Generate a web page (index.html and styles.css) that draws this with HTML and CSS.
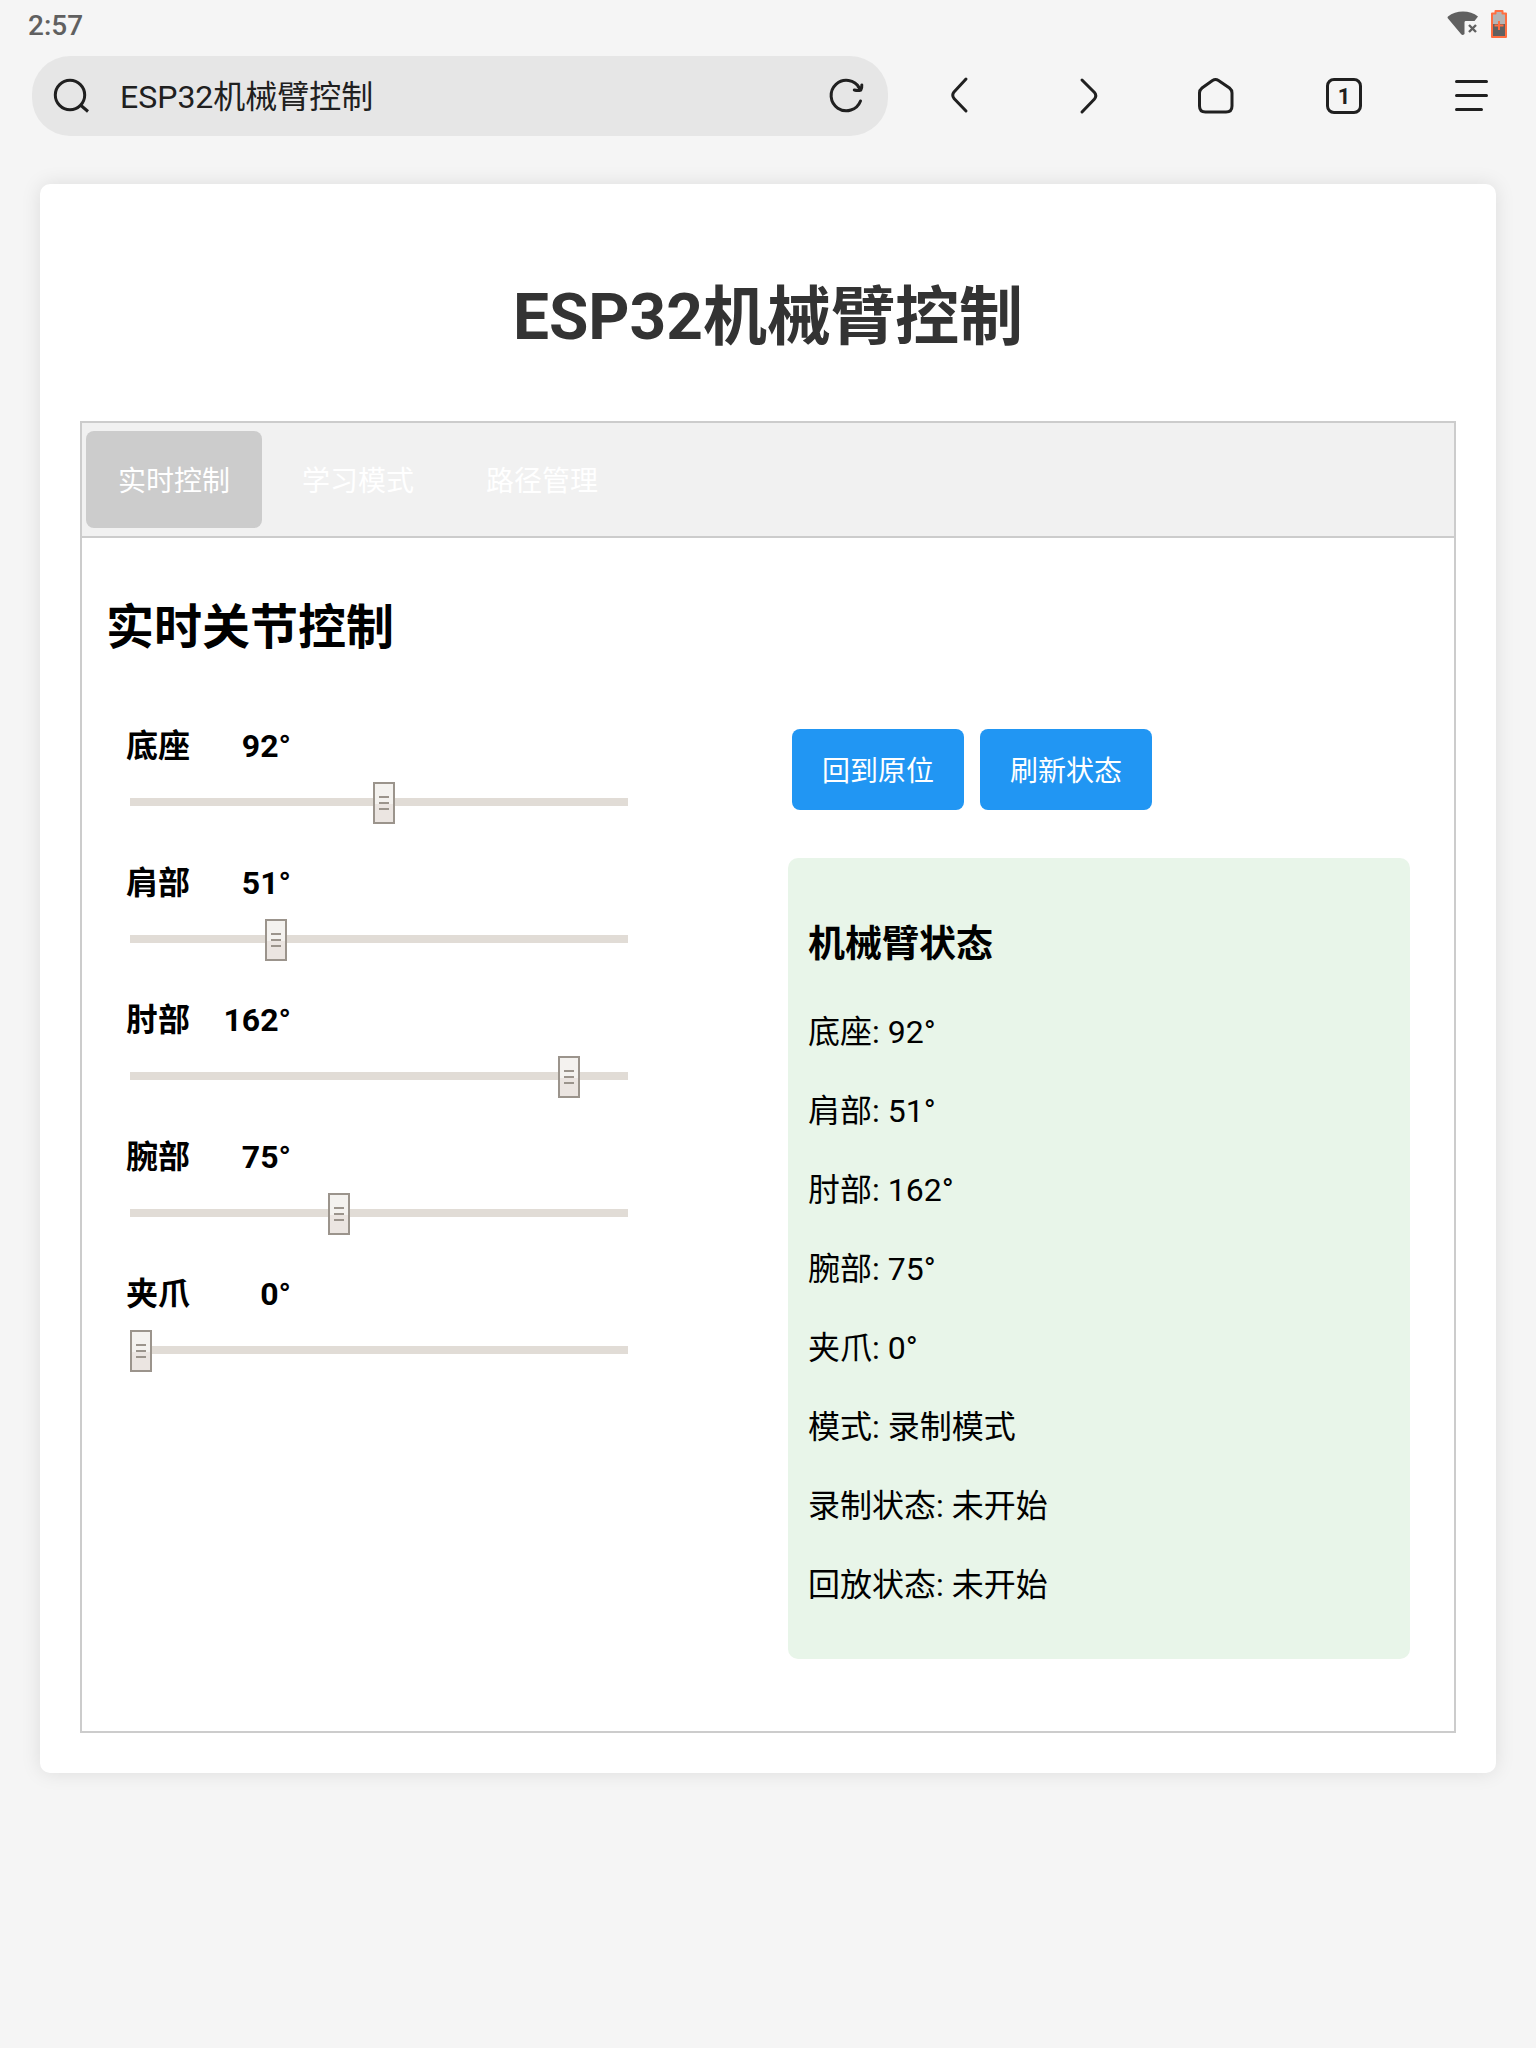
FILE: index.html
```html
<!DOCTYPE html>
<html lang="zh-CN">
<head>
<meta charset="utf-8">
<meta name="viewport" content="width=device-width, initial-scale=1">
<title>ESP32机械臂控制</title>
<link rel="stylesheet" href="styles.css">
</head>
<body>
<header class="browser">
  <div class="status-bar">
    <time class="clock">2:57</time>
    <div class="indicators">
      <svg width="32" height="28" viewBox="0 0 32 28" aria-hidden="true">
        <path d="M1 6.500C9-.3 23-.3 31 6.500L27.500 11H19c-1 0-1.500.5-1.500 1.500V24c-1.500 1.500-2.500 1.300-3.500 0L1 8.500c-.6-.7-.6-1.300 0-2z" fill="#606060"/>
        <path d="M22 15l7 7M29 15l-7 7" stroke="#606060" stroke-width="2.400" fill="none"/>
      </svg>
      <svg width="16" height="28" viewBox="0 0 16 28" aria-hidden="true">
        <path d="M4.500 3.500V1h7v2.500H15V27H1V3.500z" fill="#b4b4b4"/>
        <path d="M1 14h14v13H1z" fill="#606060"/>
        <path d="M4.500 3.500V1h7v2.500H15V27H1V3.500zM8 11v9M3.500 15.500h9" fill="none" stroke="#ff6e40" stroke-width="2" stroke-linejoin="round"/>
      </svg>
    </div>
  </div>
  <div class="toolbar">
    <div class="address">
      <svg class="search-icon" width="40" height="40" viewBox="0 0 40 40" aria-hidden="true"><circle cx="18" cy="19" r="14.700"/><path d="M29 29.500l7 6"/></svg>
      <input class="address-input" type="text" value="ESP32机械臂控制" aria-label="地址栏">
      <button class="icon-button" type="button" aria-label="刷新">
        <svg width="40" height="40" viewBox="0 0 40 40"><path class="round" d="M32.500 25A15.200 15.200 0 1 1 31.500 12M33.800 9c.2 2-.2 3.500-1 5-2 .8-4 .7-6.500 0M32.800 14l-3-4"/></svg>
      </button>
    </div>
    <nav class="browser-nav" aria-label="浏览器">
      <button class="icon-button" type="button" aria-label="后退"><svg width="40" height="40" viewBox="0 0 40 40"><path class="round" d="M26 3L14 16q-2.500 3 0 6.500L26 35"/></svg></button>
      <button class="icon-button" type="button" aria-label="前进"><svg width="40" height="40" viewBox="0 0 40 40"><path class="round" d="M14 4L26.500 16.500q2.500 3 0 6.500L14 36"/></svg></button>
      <button class="icon-button" type="button" aria-label="主页"><svg width="40" height="40" viewBox="0 0 40 40"><path d="M16.500 4.500q3-2 6 0L33.500 12q2.500 2 2.500 5V30q0 6-6 6H9.500q-6 0-6-6V17q0-3 2.500-5z"/></svg></button>
      <button class="icon-button" type="button" aria-label="标签页"><span class="tab-count">1</span></button>
      <button class="icon-button" type="button" aria-label="菜单"><svg width="40" height="40" viewBox="0 0 40 40"><path class="round" d="M4.500 5.500h30M4.500 19.500h30M4.500 33.500h25"/></svg></button>
    </nav>
  </div>
</header>

<main class="container">
  <h1 class="title">ESP32机械臂控制</h1>
  <section class="panel">
    <div class="tabs" role="tablist">
      <button class="tab active" type="button" role="tab" aria-selected="true">实时控制</button>
      <button class="tab" type="button" role="tab" aria-selected="false">学习模式</button>
      <button class="tab" type="button" role="tab" aria-selected="false">路径管理</button>
    </div>
    <div class="tab-content" role="tabpanel">
      <h2 class="section-title">实时关节控制</h2>
      <div class="columns">
        <div class="column">
          <div class="joint">
            <div class="joint-head"><label for="base">底座</label><output for="base">92°</output></div>
            <input class="slider" id="base" type="range" min="0" max="180" value="92">
          </div>
          <div class="joint">
            <div class="joint-head"><label for="shoulder">肩部</label><output for="shoulder">51°</output></div>
            <input class="slider" id="shoulder" type="range" min="0" max="180" value="51">
          </div>
          <div class="joint">
            <div class="joint-head"><label for="elbow">肘部</label><output for="elbow">162°</output></div>
            <input class="slider" id="elbow" type="range" min="0" max="180" value="162">
          </div>
          <div class="joint">
            <div class="joint-head"><label for="wrist">腕部</label><output for="wrist">75°</output></div>
            <input class="slider" id="wrist" type="range" min="0" max="180" value="75">
          </div>
          <div class="joint">
            <div class="joint-head"><label for="gripper">夹爪</label><output for="gripper">0°</output></div>
            <input class="slider" id="gripper" type="range" min="0" max="180" value="0">
          </div>
        </div>
        <div class="column">
          <div class="actions">
            <button class="action" type="button">回到原位</button>
            <button class="action" type="button">刷新状态</button>
          </div>
          <div class="status">
            <h3 class="status-title">机械臂状态</h3>
            <p>底座: 92°</p>
            <p>肩部: 51°</p>
            <p>肘部: 162°</p>
            <p>腕部: 75°</p>
            <p>夹爪: 0°</p>
            <p>模式: 录制模式</p>
            <p>录制状态: 未开始</p>
            <p>回放状态: 未开始</p>
          </div>
        </div>
      </div>
    </div>
  </section>
</main>
</body>
</html>
```
FILE: styles.css
```css
* {
  box-sizing: border-box;
}

body {
  margin: 0;
  background: #f5f5f5;
  color: #000;
  font-family: Roboto, "Noto Sans CJK SC", sans-serif;
  font-size: 32px;
  line-height: 47px;
}

button,
input {
  font-family: inherit;
}

button {
  margin: 0;
  border: 0;
  cursor: pointer;
}

/* Browser chrome */

.status-bar {
  display: flex;
  align-items: center;
  justify-content: space-between;
  height: 48px;
  padding: 0 29px 0 28px;
}

.clock {
  padding-top: 4px;
  color: #606060;
  font-size: 28px;
  font-weight: 500;
  line-height: 48px;
}

.indicators {
  display: flex;
  gap: 12px;
}

.toolbar {
  display: flex;
  align-items: center;
  gap: 8px;
  padding: 8px 0 0 32px;
}

.address {
  display: flex;
  flex: 1;
  align-items: center;
  height: 80px;
  padding: 0 20px;
  border-radius: 38px;
  background: #e6e6e6;
}

.address-input {
  flex: 1;
  min-width: 0;
  margin-left: 28px;
  padding: 2px 0 0;
  border: 0;
  outline: 0;
  background: transparent;
  color: #202020;
  font-size: 32px;
  line-height: 48px;
}

.toolbar svg {
  display: block;
  flex: none;
  fill: none;
  stroke: #202020;
  stroke-width: 3;
}

.round {
  stroke-linecap: round;
  stroke-linejoin: round;
}

.icon-button {
  display: flex;
  align-items: center;
  justify-content: center;
  padding: 0;
  background: transparent;
}

.browser-nav {
  display: flex;
}

.browser-nav .icon-button {
  width: 128px;
  height: 80px;
}

.tab-count {
  width: 36px;
  height: 36px;
  border: 3px solid #202020;
  border-radius: 8px;
  color: #202020;
  font-size: 22px;
  font-weight: 700;
  line-height: 31px;
}

/* Page */

.container {
  margin: 48px 40px;
  padding: 40px;
  border-radius: 10px;
  background: #fff;
  box-shadow: 0 0 20px rgba(0, 0, 0, 0.1);
}

.title {
  margin: 0;
  padding: 47px 0 57px;
  color: #333;
  font-size: 64px;
  line-height: 93px;
  text-align: center;
}

.panel {
  border: 2px solid #ccc;
}

.tabs {
  display: flex;
  gap: 8px;
  padding: 8px 4px;
  border-bottom: 2px solid #ccc;
  background: #f1f1f1;
}

.tab {
  padding: 30px 32px 26px;
  border-radius: 8px;
  background: transparent;
  color: #fff;
  font-size: 28px;
  line-height: 41px;
}

.tab.active {
  background: #ccc;
}

.tab-content {
  padding: 12px 24px;
}

.section-title {
  margin: 43px 0 38px;
  font-size: 48px;
  line-height: 70px;
}

.columns {
  display: flex;
}

.column {
  flex: 1;
  padding: 20px;
}

.joint {
  margin-bottom: 35px;
}

.joint-head {
  display: flex;
  margin-bottom: 11px;
  padding-top: 2px;
  font-weight: 700;
}

.joint-head output {
  width: 101px;
  text-align: right;
}

.slider {
  display: block;
  width: 80%;
  height: 42px;
  margin: 0 4px;
  -webkit-appearance: none;
  appearance: none;
  background: transparent;
}

.slider::-webkit-slider-runnable-track {
  height: 8px;
  background: #e1dcd6;
}

/* Grip lines are layered over the two-tone thumb face */
.slider::-webkit-slider-thumb {
  width: 22px;
  height: 42px;
  margin-top: -16px;
  border: 2px solid #9b948c;
  -webkit-appearance: none;
  appearance: none;
  background:
    linear-gradient(#9b948c, #9b948c) 4px 12px / 10px 2px no-repeat,
    linear-gradient(#9b948c, #9b948c) 4px 18px / 10px 2px no-repeat,
    linear-gradient(#9b948c, #9b948c) 4px 24px / 10px 2px no-repeat,
    linear-gradient(#f4f2ef 20px, #ebe5e1 20px);
}

.actions {
  display: flex;
  gap: 16px;
  margin: 8px 4px 48px;
}

.action {
  padding: 22px 30px 18px;
  border-radius: 8px;
  background: #2196f3;
  color: #fff;
  font-size: 28px;
  line-height: 41px;
}

.status {
  margin-bottom: 40px;
  padding: 20px 20px 18px;
  border-radius: 10px;
  background: #e8f5e9;
}

.status-title {
  margin: 39px 0 37px;
  font-size: 37px;
  line-height: 55px;
}

.status p {
  margin: 32px 0;
}
```
